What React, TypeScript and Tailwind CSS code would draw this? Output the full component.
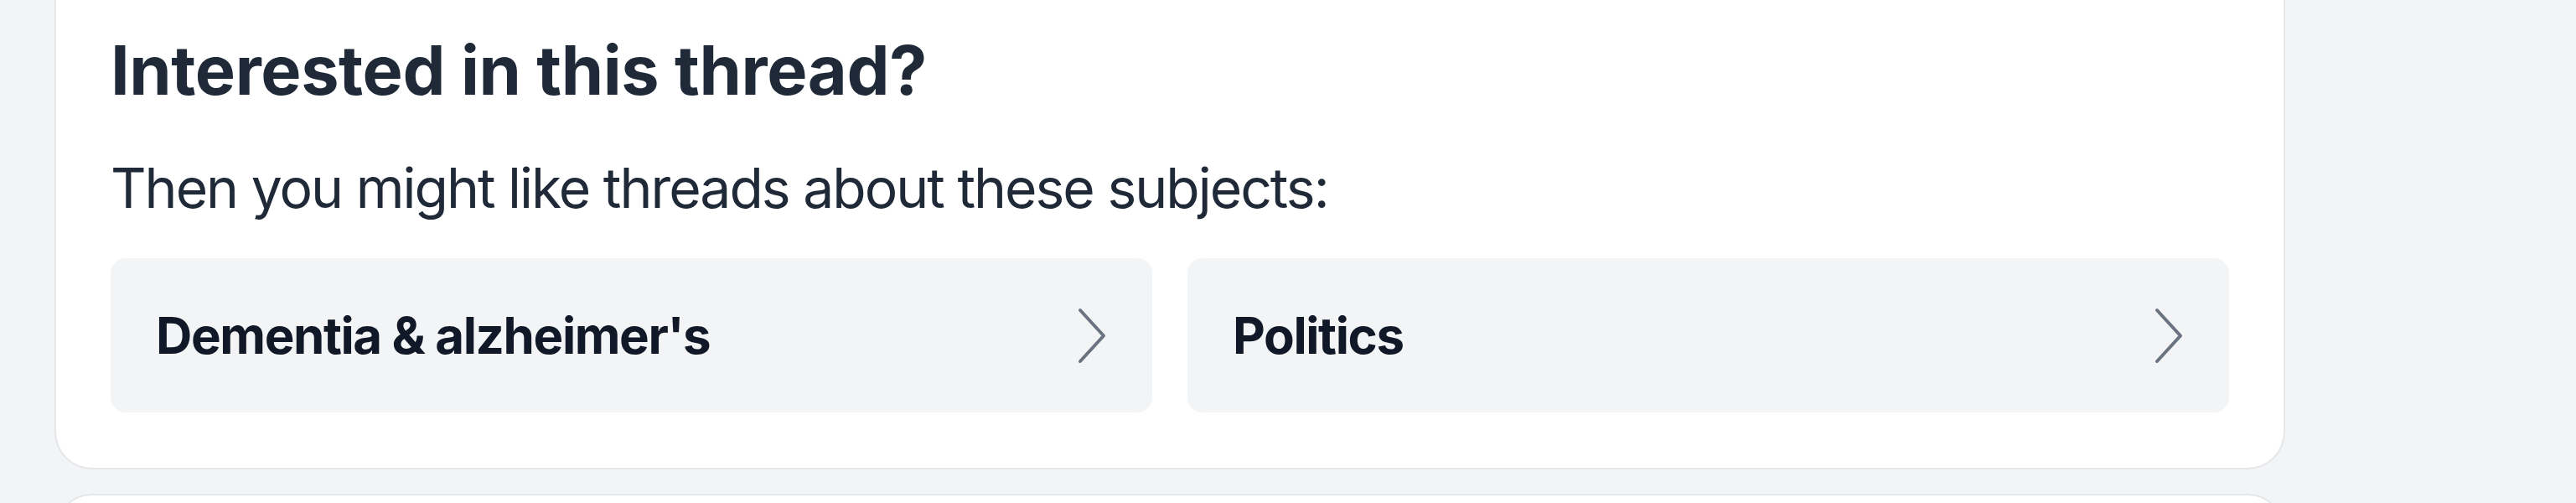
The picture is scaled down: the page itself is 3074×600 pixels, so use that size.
const topics = ["Dementia & alzheimer's", 'Politics'];

function Chevron() {
  return (
    <svg width="36" height="69" viewBox="0 0 36 69" fill="none" className="shrink-0">
      <polyline
        points="4,4 32,34.5 4,65"
        stroke="#6b7280"
        strokeWidth="4"
        strokeLinecap="round"
        strokeLinejoin="round"
      />
    </svg>
  );
}

export default function App() {
  return (
    <div className="min-h-[600px] w-[3074px] overflow-hidden bg-[#f3f4f6] font-['Inter',sans-serif]">
      <div className="ml-[65px] w-[2662px]">
        <section className="rounded-b-[45px] border-x-2 border-b-2 border-[#e5e7eb] bg-white px-[65px] pt-[44px] pb-[66px]">
          <h2 className="text-[81px] leading-none font-bold tracking-[-0.4px] text-[#1f2937]">
            Interested in this thread?
          </h2>
          <p className="mt-[66px] text-[66px] leading-none tracking-[-2px] text-[#1f2937]">
            Then you might like threads about these subjects:
          </p>
          <div className="mt-[51px] grid grid-cols-2 gap-[42px]">
            {topics.map((topic) => (
              <a
                key={topic}
                href="#"
                className="flex h-[184px] items-center justify-between rounded-[18px] bg-[#f3f4f6] px-[54px]"
              >
                <span className="text-[60px] leading-none font-bold tracking-[-1.4px] text-[#111827]">
                  {topic}
                </span>
                <Chevron />
              </a>
            ))}
          </div>
        </section>
        <section className="mt-[29px] h-[200px] rounded-t-[45px] border-2 border-[#e5e7eb] bg-white" />
      </div>
    </div>
  );
}
